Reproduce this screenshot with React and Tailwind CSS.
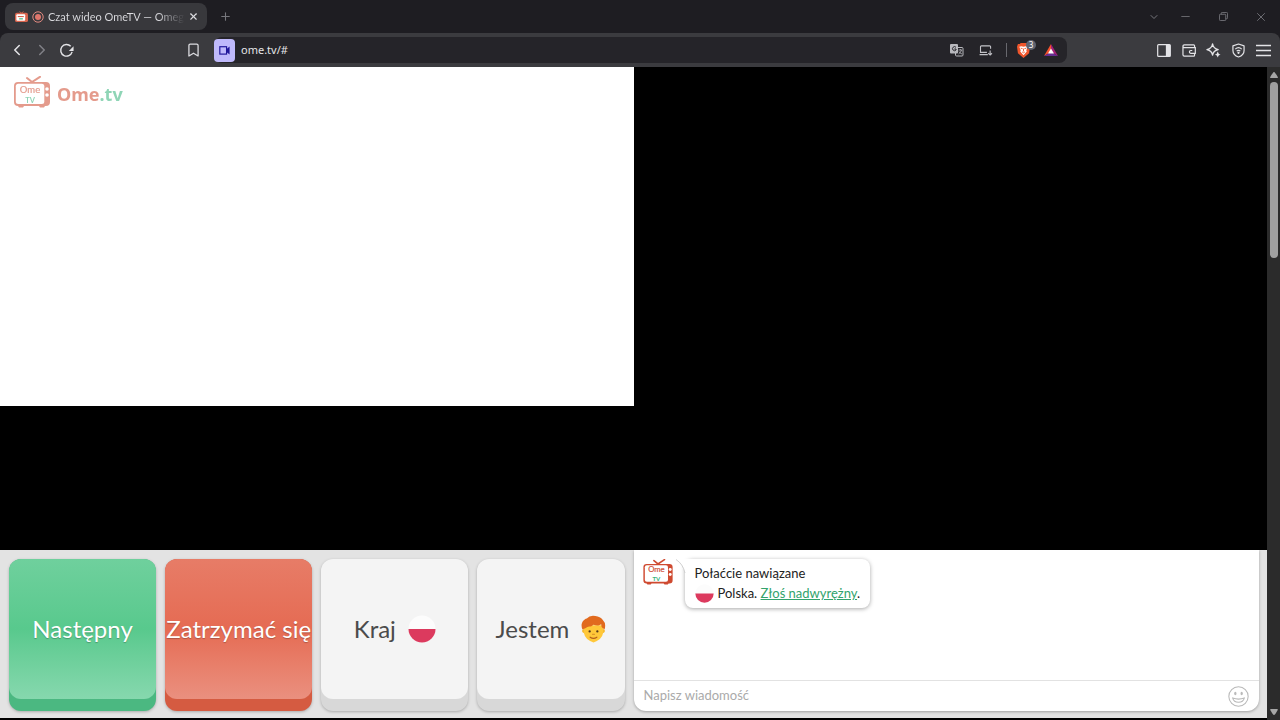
import { useState } from "react";
import { ChevronDown, ChevronLeft, ChevronRight, Minus, Plus, X } from "lucide-react";

const iconButton = "flex h-6 w-[25px] shrink-0 items-center justify-center text-[#e4e4e7]";

function TvLogo({ className }) {
  return (
    <svg viewBox="0 0 36 32" className={className} aria-hidden="true">
      <path d="M13 2 18 6 26 .8" fill="none" stroke="#cf4a30" strokeWidth="2" strokeLinecap="round" />
      <path
        fillRule="evenodd"
        fill="#cf4a30"
        d="M4 6h28q4 0 4 4v16q0 4-4 4h-1l-1 1.500h-4L25 30H10l-1 1.500H5L4 30q-4 0-4-4V10q0-4 4-4Z"
      />
      <rect x="1.800" y="7.800" width="28.500" height="20.200" rx="2.500" fill="#fff" />
      <circle cx="33" cy="13" r="1.800" fill="#fff" />
      <circle cx="33" cy="19" r="1.800" fill="#fff" />
      <text x="16" y="16.500" textAnchor="middle" fontSize="9.500" fontFamily="Lato, sans-serif" fill="#cf4a30" stroke="#cf4a30" strokeWidth=".2">
        Ome
      </text>
      <text x="16" y="26.500" textAnchor="middle" fontSize="7.500" fontWeight="700" fontFamily="Lato, sans-serif" fill="#35b37c">
        TV
      </text>
    </svg>
  );
}

function PolishFlag({ className }) {
  return (
    <svg viewBox="0 0 28 28" className={className} aria-hidden="true">
      <circle cx="14" cy="14" r="13.500" fill="#fcfcfc" />
      <path d="M.5 14a13.500 13.500 0 0 0 27 0Z" fill="#dc3a5e" />
    </svg>
  );
}

function BoyFace({ className }) {
  return (
    <svg viewBox="0 0 26 28" className={className} aria-hidden="true">
      <ellipse cx="13" cy="16" rx="12" ry="4" fill="#f5b82e" />
      <path d="M3 10h20v8q-1 7-10 10Q4 25 3 18Z" fill="#ffc83a" />
      <path
        d="M1.500 14.500C-1 9 2 4 6 3q3-3.500 9-2.500 5 .5 7.500 4 4 4 2 10l-2-1.500q-1.500-1-1.500-4c-3 2-5 1.500-8 .5-3 3-6 1-8 3.500Z"
        fill="#e16a1e"
      />
      <circle cx="9" cy="16.500" r="1.200" fill="#54381c" />
      <circle cx="17" cy="16.500" r="1.200" fill="#54381c" />
      <path d="M12 19.500h2" stroke="#d58a22" strokeWidth="1.200" strokeLinecap="round" />
      <path d="M9.500 22.500q3.500 2.500 7 0" fill="none" stroke="#b45f1c" strokeWidth="1.200" strokeLinecap="round" />
    </svg>
  );
}

function TabStrip() {
  return (
    <div className="flex h-[33px] items-center bg-[#1e1d22] text-[#dcdce0]">
      <div className="ml-[5px] flex h-[27px] w-[202px] items-center rounded-lg bg-[#38383c] pr-[6px] pl-[10px]">
        <svg viewBox="0 0 14 12" className="h-3 w-[13px] shrink-0" aria-hidden="true">
          <path d="m5 0 2 2 2-2" fill="none" stroke="#d8644d" />
          <rect y="1.500" width="14" height="10" rx="2" fill="#d8644d" />
          <rect x="1.500" y="3" width="9.500" height="7" rx="1" fill="#fff" />
          <path d="M3 5.500h6.500" stroke="#d8644d" strokeWidth="1.200" />
          <path d="M4.500 8h4" stroke="#35b37c" strokeWidth="1.200" />
        </svg>
        <svg viewBox="0 0 12 12" className="ml-1 h-3 w-3 shrink-0" aria-hidden="true">
          <circle cx="6" cy="6" r="5.200" fill="none" stroke="#e38a80" />
          <circle cx="6" cy="6" r="3" fill="#e0766c" />
        </svg>
        <span className="ml-1 min-w-0 flex-1 bg-linear-to-r from-[#dcdce0] from-80% to-[#38383c] bg-clip-text font-[Lato,sans-serif] text-[11px] leading-4 whitespace-nowrap text-transparent">
          Czat wideo OmeTV — Omegl
        </span>
        <button type="button" aria-label="Close tab" className="flex h-4 w-4 items-center justify-center">
          <X size={11} strokeWidth={2.5} />
        </button>
      </div>
      <button type="button" aria-label="New tab" className="ml-2 flex h-5 w-5 items-center justify-center text-[#77777d]">
        <Plus size={13} strokeWidth={2} />
      </button>
      <div className="ml-auto flex items-center text-[#77777d]">
        <button type="button" aria-label="Search tabs" className="flex h-6 w-6 items-center justify-center">
          <ChevronDown size={12} />
        </button>
        <button type="button" aria-label="Minimize" className="flex h-6 w-[38px] items-center justify-center">
          <Minus size={13} strokeWidth={1.5} />
        </button>
        <button type="button" aria-label="Restore" className="flex h-6 w-[38px] items-center justify-center">
          <svg viewBox="0 0 10 10" className="h-[9px] w-[9px]" fill="none" stroke="currentColor">
            <rect x=".5" y="2.500" width="7" height="7" rx="1" />
            <path d="M2.500 2.500V1.500q0-1 1-1h5q1 0 1 1v5q0 1-1 1h-1" />
          </svg>
        </button>
        <button type="button" aria-label="Close" className="flex h-6 w-[38px] items-center justify-center">
          <X size={14} strokeWidth={1.5} />
        </button>
      </div>
    </div>
  );
}

function AddressBar() {
  return (
    <div className="ml-2 flex h-[26px] min-w-0 flex-1 items-center rounded-lg bg-[#252429]">
      <button type="button" aria-label="Camera in use" className="flex h-[23px] w-[21px] shrink-0 items-center justify-center rounded bg-[#bfb9fb]">
        <svg viewBox="0 0 12 10" className="h-[9px] w-[11px]" fill="none" stroke="#20169a" strokeWidth="1.3">
          <rect x=".8" y=".8" width="7.500" height="8.200" />
          <path d="m8.500 4 2.500-2v6l-2.500-2Z" fill="#20169a" />
        </svg>
      </button>
      <input
        aria-label="Address"
        defaultValue="ome.tv/#"
        className="ml-[6px] min-w-0 flex-1 bg-transparent text-[11px] text-[#e4e4e7] outline-none"
      />
      <button type="button" aria-label="Translate" className="flex h-6 w-7 items-center justify-center">
        <svg viewBox="0 0 14 13" className="h-[13px] w-[14px]" aria-hidden="true">
          <rect x="5.500" y="3.500" width="7.500" height="8.500" rx="1" fill="none" stroke="#b8b8bd" />
          <rect x="0" y="0" width="8" height="9.500" rx="1" fill="#b8b8bd" />
          <path d="M6 3.300A2 2 0 1 0 6 6V5H4.300" fill="none" stroke="#252429" />
          <path d="M8.500 6h3.500M10.300 5v1M11.500 6q-.5 2.500-3 4M9 7.500q1 2 3 2.500" fill="none" stroke="#b8b8bd" strokeWidth=".8" />
        </svg>
      </button>
      <button type="button" aria-label="Install app" className="flex h-6 w-[30px] items-center justify-center">
        <svg viewBox="0 0 14 12" className="h-[11px] w-[14px]" fill="none" stroke="#c2c2c7" strokeWidth="1.200">
          <path d="M12 4V2q0-1-1-1H2Q1 1 1 2v6h7M0 10.500h9M11.500 6v5M9.500 9l2 2 2-2" />
        </svg>
      </button>
      <span className="ml-[5px] h-[14px] w-px bg-[#68686e]" />
      <button type="button" aria-label="Shields" className="relative ml-[3px] flex h-6 w-[26px] items-center justify-center">
        <svg viewBox="0 0 14 16" className="h-[15px] w-[13px]" aria-hidden="true">
          <path d="m4 0-1 1H1L0 4l1 7 6 5 6-5 1-7-1-3h-2l-1-1Z" fill="#f0562c" />
          <path d="m2.500 4 2-.5L7 4l2.500-.5 2 .5-1.500 4 .5 1L7 13 3.500 9 4 8Z" fill="#fff" />
          <path d="m4 5.500 2 .5M10 5.500 8 6M7 6v3M5.500 9.500 7 10.500l1.500-1" stroke="#f0562c" fill="none" />
        </svg>
        <span className="absolute top-[2px] right-0 flex h-[10px] w-[10px] items-center justify-center rounded-full bg-[#5f6471] text-[8px] text-white">
          3
        </span>
      </button>
      <button type="button" aria-label="Rewards" className="mr-1 ml-[3px] flex h-6 w-6 items-center justify-center">
        <svg viewBox="0 0 14 12" className="h-3 w-[14px]" aria-hidden="true">
          <path d="M7 0 0 12l7-4Z" fill="#f5522e" />
          <path d="M7 0v8l7 4Z" fill="#a31f78" />
          <path d="m0 12 7-4 7 4Z" fill="#662d91" />
          <path d="m7 4.500 3 5H4Z" fill="#fff" />
        </svg>
      </button>
    </div>
  );
}

function Toolbar() {
  return (
    <div className="bg-[#1e1d22]">
      <div className="flex h-[34px] items-center rounded-t-lg bg-[#3b3b3f] px-1">
        <button type="button" aria-label="Back" className={iconButton}>
          <ChevronLeft size={18} />
        </button>
        <button type="button" aria-label="Forward" className="flex h-6 w-[25px] shrink-0 items-center justify-center text-[#818187]">
          <ChevronRight size={18} />
        </button>
        <button type="button" aria-label="Reload" className={iconButton}>
          <svg viewBox="0 0 16 16" className="h-[15px] w-[15px]" aria-hidden="true">
            <path d="M12.500 3.500A6.200 6.200 0 1 0 14 9.500" fill="none" stroke="currentColor" strokeWidth="1.500" />
            <path d="M15.500 3.500v5h-5Z" fill="currentColor" />
          </svg>
        </button>
        <button type="button" aria-label="Bookmark" className="ml-[102px] flex h-6 w-[25px] shrink-0 items-center justify-center text-[#dcdce0]">
          <svg viewBox="0 0 12 15" className="h-[14px] w-[11px]" fill="none" stroke="currentColor" strokeWidth="1.400">
            <path d="M1 2.500Q1 1 2.500 1h7Q11 1 11 2.500V14l-5-3-5 3Z" strokeLinejoin="round" />
          </svg>
        </button>
        <AddressBar />
        <div className="ml-[84px] flex items-center">
          <button type="button" aria-label="Sidebar" className={iconButton}>
            <svg viewBox="0 0 15 14" className="h-[13px] w-[14px]" aria-hidden="true">
              <rect x=".7" y=".7" width="13.600" height="12.600" rx="1" fill="none" stroke="currentColor" strokeWidth="1.300" />
              <path d="M9.500 1H14v12H9.500Z" fill="currentColor" />
            </svg>
          </button>
          <button type="button" aria-label="Wallet" className={iconButton}>
            <svg viewBox="0 0 15 14" className="h-[13px] w-[14px]" fill="none" stroke="currentColor" strokeWidth="1.300">
              <path d="M13.500 4V2q0-1-1-1h-10Q1 1 1 2.500v9Q1 13 2.500 13h10q1 0 1-1v-2M1 2.500Q1 4 2.500 4h11.800v6H9.500Q8 10 8 8.500T9.500 7h1.500" />
            </svg>
          </button>
          <button type="button" aria-label="Leo AI" className={iconButton}>
            <svg viewBox="0 0 16 16" className="h-[15px] w-[15px]" aria-hidden="true">
              <path d="M7 1q.8 5 6 6-5.200 1-6 6-.8-5-6-6 5.200-1 6-6Z" fill="none" stroke="currentColor" strokeWidth="1.400" strokeLinejoin="round" />
              <path d="M12.500 9q.5 2.700 3 3.200-2.500.5-3 3.300-.5-2.800-3-3.300 2.500-.5 3-3.200Z" fill="currentColor" />
            </svg>
          </button>
          <button type="button" aria-label="VPN" className={iconButton}>
            <svg viewBox="0 0 14 16" className="h-[15px] w-[13px]" fill="none" stroke="currentColor" strokeWidth="1.300">
              <path d="m7 1 6 2v5q0 5-6 7-6-2-6-7V3Z" strokeLinejoin="round" />
              <path d="M3.500 6.500q3.500-3 7 0M5 8.700q2-1.700 4 0" />
              <circle cx="7" cy="10.500" r=".6" fill="currentColor" />
            </svg>
          </button>
          <button type="button" aria-label="Menu" className={iconButton}>
            <svg viewBox="0 0 15 13" className="h-[13px] w-[15px]" stroke="currentColor" strokeWidth="1.300">
              <path d="M0 1.500h15M0 6.500h15M0 11.500h15" />
            </svg>
          </button>
        </div>
      </div>
    </div>
  );
}

function KeyButton({ baseClass, faceClass, children }) {
  return (
    <button type="button" className={`flex min-w-0 rounded-xl pb-3 shadow-[0_1px_3px_rgba(0,0,0,0.25)] ${baseClass}`}>
      <span className={`flex h-[140px] w-full items-center justify-center gap-3 rounded-xl text-[24px] whitespace-nowrap ${faceClass}`}>
        {children}
      </span>
    </button>
  );
}

function Controls() {
  return (
    <div className="grid grid-cols-4 gap-[9px] px-[9px] pt-[9px] pb-[7px]">
      <KeyButton
        baseClass="bg-[#4bb881]"
        faceClass="bg-linear-to-b from-[#6fd09d] via-[#58c98d] to-[#86d8ae] text-white [text-shadow:0_1px_1px_rgba(0,0,0,0.25)]"
      >
        Następny
      </KeyButton>
      <KeyButton
        baseClass="bg-[#d55b41]"
        faceClass="bg-linear-to-b from-[#e77c67] via-[#e56b53] to-[#ea907f] text-white [text-shadow:0_1px_1px_rgba(0,0,0,0.25)]"
      >
        Zatrzymać się
      </KeyButton>
      <KeyButton baseClass="bg-[#d8d8d8]" faceClass="bg-[#f4f4f4] text-[#4b4b4b]">
        Kraj
        <PolishFlag className="h-7 w-7" />
      </KeyButton>
      <KeyButton baseClass="bg-[#d8d8d8]" faceClass="bg-[#f4f4f4] text-[#4b4b4b]">
        Jestem
        <BoyFace className="h-7 w-[25px]" />
      </KeyButton>
    </div>
  );
}

function Chat() {
  const [message, setMessage] = useState("");

  return (
    <div className="mr-2 mb-[7px] flex flex-col rounded-b-xl bg-white shadow-[0_1px_3px_rgba(0,0,0,0.3)]">
      <div className="flex flex-1 items-start pt-[9px] pl-[9px]">
        <TvLogo className="h-[26px] w-[30px]" />
        <div className="relative ml-3 rounded-lg bg-white px-[10px] pt-1 pb-[5px] text-[13px] leading-5 text-[#222] shadow-[0_1px_4px_rgba(0,0,0,0.35)]">
          <svg viewBox="0 0 18 14" className="absolute top-0 -left-[9px] h-[14px] w-[18px]" aria-hidden="true">
            <path d="M0 0h18v14H9Q7 5 0 0Z" fill="#fff" />
            <path d="M0 .5q7 4.500 9 13.500" fill="none" stroke="#cfcfcf" />
          </svg>
          <p className="relative">Połaćcie nawiązane</p>
          <p className="flex items-center">
            <PolishFlag className="mr-1 h-[19px] w-[19px]" />
            <span>
              Polska.{" "}
              <a href="#" className="text-[#32a36c] underline">
                Złoś nadwyrężny
              </a>
              .
            </span>
          </p>
        </div>
      </div>
      <div className="flex h-[31px] items-center border-t border-[#e2e2e2] px-[10px]">
        <input
          aria-label="Napisz wiadomość"
          placeholder="Napisz wiadomość"
          value={message}
          onChange={(event) => setMessage(event.target.value)}
          className="min-w-0 flex-1 bg-transparent text-[13px] text-[#333] outline-none placeholder:text-[#aaaaaa]"
        />
        <button type="button" aria-label="Emoji">
          <svg viewBox="0 0 20 20" className="h-[21px] w-[21px]" fill="none" stroke="#b9b9b9" strokeWidth="1">
            <circle cx="10" cy="10" r="9.200" />
            <ellipse cx="7" cy="7.200" rx=".6" ry="1.200" fill="#b9b9b9" />
            <ellipse cx="13" cy="7.200" rx=".6" ry="1.200" fill="#b9b9b9" />
            <path d="M4.500 11.500q5.500 2 11 0-1 4-5.500 4t-5.500-4Z" />
          </svg>
        </button>
      </div>
    </div>
  );
}

function Scrollbar() {
  return (
    <div className="flex w-[13px] shrink-0 flex-col items-center bg-[#2b2b2b] py-[5px]">
      <svg viewBox="0 0 8 6" className="h-[6px] w-2" fill="#a6a6a6" aria-hidden="true">
        <path d="M4 0q1 0 4 5.500-.5.500-1 .5H1q-.5 0-1-.5Q3 0 4 0Z" />
      </svg>
      <div className="mt-1 flex w-full flex-1 justify-center">
        <div className="h-[28%] w-2 rounded-full bg-[#a0a0a0]" />
      </div>
      <svg viewBox="0 0 8 6" className="h-[6px] w-2" fill="#a6a6a6" aria-hidden="true">
        <path d="M4 6Q3 6 0 .5.500 0 1 0h6q.5 0 1 .5Q5 6 4 6Z" />
      </svg>
    </div>
  );
}

function App() {
  return (
    <div className="flex min-h-screen flex-col bg-black font-['Noto_Sans',sans-serif]">
      <TabStrip />
      <Toolbar />
      <div className="flex flex-1">
        <main className="flex min-w-0 flex-1 flex-col font-[Lato,sans-serif]">
          <div className="grid flex-1 grid-cols-2 bg-black">
            <section aria-label="Partner video">
              <div className="aspect-[28/15] bg-white px-[14px] pt-[9px]">
                <a href="#" className="flex w-fit items-center gap-[7px] opacity-55">
                  <TvLogo className="h-8 w-9" />
                  <span className="pt-1 font-['Noto_Sans',sans-serif] text-[18px] leading-6 font-bold text-[#cf4a30]">
                    Ome<span className="text-[#35b37c]">.tv</span>
                  </span>
                </a>
              </div>
            </section>
            <section aria-label="Your video" />
          </div>
          <div className="mb-[2px] grid grid-cols-2 bg-[#e3e3e3]">
            <Controls />
            <Chat />
          </div>
        </main>
        <Scrollbar />
      </div>
    </div>
  );
}

export default App;
